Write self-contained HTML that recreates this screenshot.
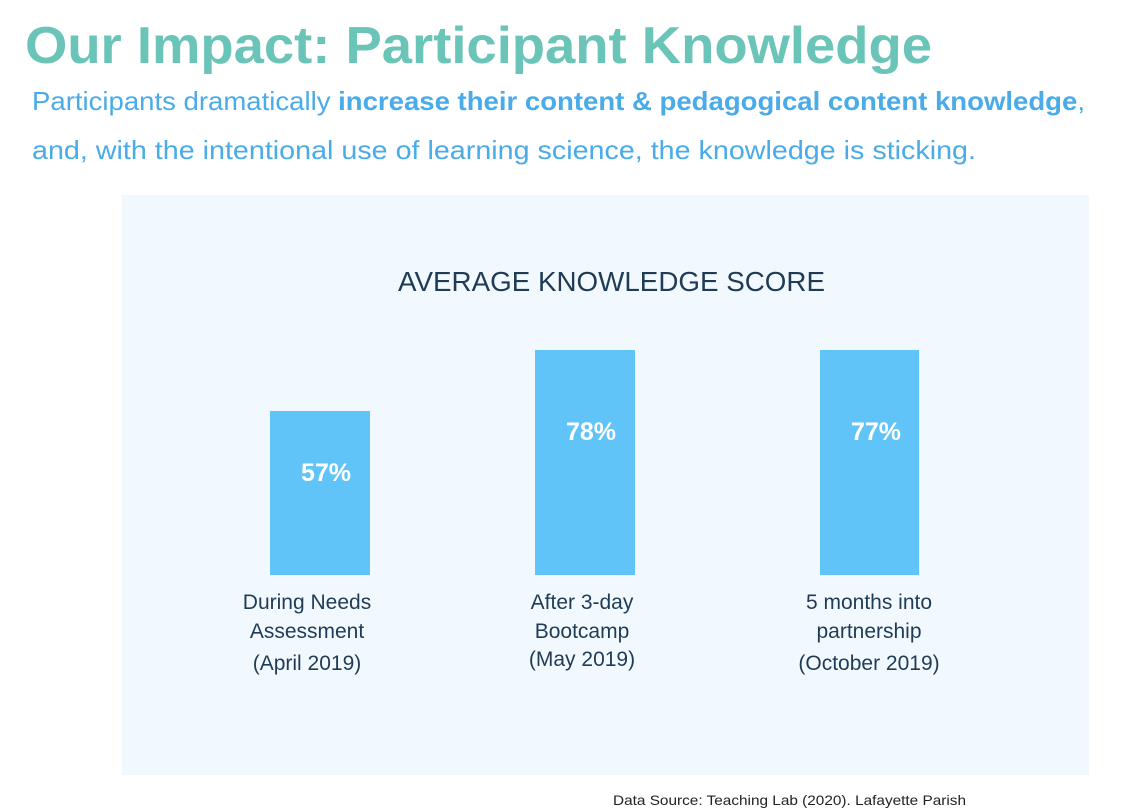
<!DOCTYPE html>
<html><head><meta charset="utf-8"><style>
html,body{margin:0;padding:0;background:#fff;width:1128px;height:810px;overflow:hidden}
svg{display:block;font-family:"Liberation Sans",sans-serif}
</style></head><body>
<svg width="1128" height="810" viewBox="0 0 1128 810">
<rect width="1128" height="810" fill="#fff"/>
<text x="25" y="63" font-size="52" font-weight="bold" fill="#6bc4b8" textLength="907" lengthAdjust="spacingAndGlyphs">Our Impact: Participant Knowledge</text>
<text x="32" y="110" font-size="26" fill="#4aabe9" textLength="1053" lengthAdjust="spacingAndGlyphs">Participants dramatically <tspan font-weight="bold">increase their content &amp; pedagogical content knowledge</tspan>,</text>
<text x="32" y="159" font-size="26" fill="#4aabe9" textLength="944" lengthAdjust="spacingAndGlyphs">and, with the intentional use of learning science, the knowledge is sticking.</text>
<rect x="122" y="195" width="967" height="580" fill="#f2f9fe"/>
<text x="398" y="291" font-size="28" fill="#1f3b55" textLength="427" lengthAdjust="spacingAndGlyphs">AVERAGE KNOWLEDGE SCORE</text>
<rect x="270" y="411" width="100" height="164" fill="#61c4f8"/>
<rect x="535" y="350" width="100" height="225" fill="#61c4f8"/>
<rect x="820" y="350" width="99" height="225" fill="#61c4f8"/>
<g font-size="25" font-weight="bold" fill="#fff" text-anchor="middle">
<text x="326" y="481">57%</text><text x="591" y="440">78%</text><text x="876" y="440">77%</text>
</g>
<g font-size="21" fill="#1f3b55" text-anchor="middle">
<text x="307" y="609">During Needs</text><text x="307" y="638">Assessment</text><text x="307" y="670">(April 2019)</text>
<text x="582" y="609">After 3-day</text><text x="582" y="638">Bootcamp</text><text x="582" y="666">(May 2019)</text>
<text x="869" y="609">5 months into</text><text x="869" y="638">partnership</text><text x="869" y="670">(October 2019)</text>
</g>
<text x="613" y="805" font-size="14" fill="#222" textLength="353" lengthAdjust="spacingAndGlyphs">Data Source: Teaching Lab (2020). Lafayette Parish</text>
</svg>
</body></html>
